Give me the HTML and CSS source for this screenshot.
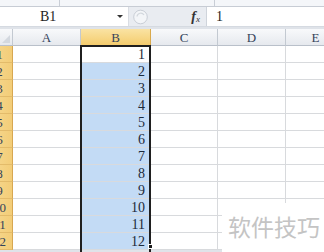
FILE: index.html
```html
<!DOCTYPE html>
<html>
<head>
<meta charset="utf-8">
<link rel="stylesheet" href="styles.css">
</head>
<body>
<div class="app">
  <div class="strip">
    <div class="seg seg1"></div>
    <div class="seg seg2"></div>
    <div class="seg seg3"></div>
  </div>
  <div class="fbar">
    <div class="namebox"><span class="name">B1</span><span class="arrow"></span></div>
    <div class="splitter">
      <svg width="15" height="16" viewBox="0 0 15 16"><circle cx="7.5" cy="8" r="6.8" fill="#f3f5f8" stroke="#c9ced6" stroke-width="1"/><path d="M4 7.5 A3.8 3.8 0 0 1 11 6" fill="none" stroke="#d3d8de" stroke-width="1.2"/></svg>
    </div>
    <div class="fx"><span class="f">f</span><span class="x">x</span></div>
    <div class="input">1</div>
  </div>
  <div class="sheet">
    <div class="grid">
      <div class="h corner"><span class="tri"></span></div>
      <div class="h">A</div>
      <div class="h hsel">B</div>
      <div class="h">C</div>
      <div class="h">D</div>
      <div class="h">E</div>

      <div class="r">1</div><div class="c"></div><div class="c b act">1</div><div class="c"></div><div class="c"></div><div class="c"></div>
      <div class="r">2</div><div class="c"></div><div class="c b">2</div><div class="c"></div><div class="c"></div><div class="c"></div>
      <div class="r">3</div><div class="c"></div><div class="c b">3</div><div class="c"></div><div class="c"></div><div class="c"></div>
      <div class="r">4</div><div class="c"></div><div class="c b">4</div><div class="c"></div><div class="c"></div><div class="c"></div>
      <div class="r">5</div><div class="c"></div><div class="c b">5</div><div class="c"></div><div class="c"></div><div class="c"></div>
      <div class="r">6</div><div class="c"></div><div class="c b">6</div><div class="c"></div><div class="c"></div><div class="c"></div>
      <div class="r">7</div><div class="c"></div><div class="c b">7</div><div class="c"></div><div class="c"></div><div class="c"></div>
      <div class="r">8</div><div class="c"></div><div class="c b">8</div><div class="c"></div><div class="c"></div><div class="c"></div>
      <div class="r">9</div><div class="c"></div><div class="c b">9</div><div class="c"></div><div class="c"></div><div class="c"></div>
      <div class="r">10</div><div class="c"></div><div class="c b">10</div><div class="c"></div><div class="c"></div><div class="c"></div>
      <div class="r">11</div><div class="c"></div><div class="c b">11</div><div class="c"></div><div class="c"></div><div class="c"></div>
      <div class="r">12</div><div class="c"></div><div class="c b">12</div><div class="c"></div><div class="c"></div><div class="c"></div>
    </div>
    <div class="selection"><span class="handle"></span></div>
  </div>
  <div class="watermark">软件技巧</div>
</div>
</body>
</html>
```

FILE: styles.css
```css
* { box-sizing: border-box; margin: 0; padding: 0; }
html, body { width: 324px; height: 252px; overflow: hidden; background: #fff; }
body { font-family: "Liberation Serif", "DejaVu Serif", serif; }
.app { position: relative; width: 324px; height: 252px; overflow: hidden; background: #dfe3e9; }

.strip { display: flex; height: 7px; background: #f4f6f9; border-bottom: 1px solid #c7ccd4; }
.seg { height: 100%; }
.seg1 { width: 60px; border-right: 1px solid #c9ced6; }
.seg2 { width: 155px; border-right: 1px solid #c9ced6; }
.seg3 { flex: 1; }

.fbar { display: flex; height: 20px; background: #e9ecf1; border-bottom: 1px solid #d5dae1; }
.namebox { width: 129px; background: #fff; display: flex; align-items: center; padding-left: 40px; border-right: 1px solid #d9dde3; }
.name { font-size: 14px; color: #1e1e1e; line-height: 18px; }
.arrow { margin-left: auto; margin-right: 5px; width: 0; height: 0; border-left: 3px solid transparent; border-right: 3px solid transparent; border-top: 3px solid #333; }
.splitter { width: 51px; display: flex; align-items: center; padding-left: 4px; }
.fx { width: 27px; display: flex; align-items: center; justify-content: flex-end; padding-right: 6px; border-right: 1px solid #cfd4db; color: #333; }
.fx .f { font-style: italic; font-size: 14px; font-weight: bold; }
.fx .x { font-style: italic; font-size: 9px; margin-top: 5px; }
.input { flex: 1; background: #fff; padding-left: 9px; font-size: 14px; line-height: 19px; color: #1e1e1e; }

.sheet { position: relative; margin-top: 2px; margin-left: -13px; }
.grid { display: grid; grid-template-columns: 26px 68px 70px 67px 68px 60px; grid-auto-rows: 17px; }
.h { background: linear-gradient(#f8f9fb, #e6e9ee); border-right: 1px solid #c3c9d1; border-bottom: 1px solid #b9c0ca; text-align: center; font-size: 13px; line-height: 17px; color: #34435a; }
.hsel { background: linear-gradient(#fae3a3, #f4cc6e); border-right-color: #d9a94d; border-bottom-color: #d9a94d; }
.corner { position: relative; }
.tri { position: absolute; right: 2px; bottom: 2px; width: 0; height: 0; border-left: 8px solid transparent; border-bottom: 8px solid #d3d8df; }
.r { background: linear-gradient(90deg, #f7da94, #f3cd78); border-right: 1px solid #d7a751; border-bottom: 1px solid #e3bb6a; text-align: center; font-size: 13px; line-height: 17px; color: #34435a; }
.c { background: #fff; border-right: 1px solid #d8dadd; border-bottom: 1px solid #d8dadd; }
.b { background: #c3dbf5; text-align: right; padding-right: 5px; font-size: 14px; line-height: 17px; color: #1c2a3a; }
.act { background: #fff; }

.selection { position: absolute; left: 93px; top: 16px; width: 71px; height: 210px; border: 2px solid #1f1f1f; }
.handle { position: absolute; right: -4px; bottom: 4px; width: 5px; height: 5px; background: #1f1f1f; border: 1px solid #fff; }

.watermark { position: absolute; left: 222px; top: 203px; width: 102px; height: 49px; background: #fff; padding-left: 6px; padding-top: 8px; font-family: "Noto Sans CJK SC", sans-serif; font-size: 23px; line-height: 30px; color: #c4c4c4; }
```
